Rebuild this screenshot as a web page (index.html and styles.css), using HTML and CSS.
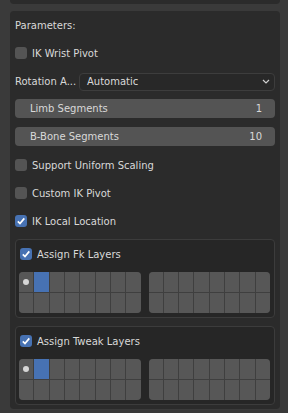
FILE: index.html
```html
<!DOCTYPE html>
<html>
    <head>
        <title>rig parameters</title>
        <meta charset="UTF-8">
        <link rel="stylesheet" href="styles.css">
    </head>
    <body>
        <div class="stub"></div>
        <div class="panel">
            <div class="row"><span class="label">Parameters:</span></div>
            <div class="row">
                <span class="check"></span>
                <span class="label">IK Wrist Pivot</span>
            </div>
            <div class="row">
                <span class="prop_name">Rotation A...</span>
                <div class="select">
                    <span>Automatic</span>
                    <svg class="chevron" width="8" height="5" viewBox="0 0 8 5"><path d="M1 1 L4 4 L7 1" fill="none" stroke="#cfcfcf" stroke-width="1.2"/></svg>
                </div>
            </div>
            <div class="row slider"><span>Limb Segments</span><span>1</span></div>
            <div class="row slider"><span>B-Bone Segments</span><span>10</span></div>
            <div class="row">
                <span class="check"></span>
                <span class="label">Support Uniform Scaling</span>
            </div>
            <div class="row">
                <span class="check"></span>
                <span class="label">Custom IK Pivot</span>
            </div>
            <div class="row">
                <span class="check on"><svg width="12" height="12" viewBox="0 0 12 12"><path d="M2.8 6.3 L5 8.5 L9.3 3.4" fill="none" stroke="#fff" stroke-width="1.7"/></svg></span>
                <span class="label">IK Local Location</span>
            </div>

            <div class="box">
                <div class="row box_head">
                    <span class="check on"><svg width="12" height="12" viewBox="0 0 12 12"><path d="M2.8 6.3 L5 8.5 L9.3 3.4" fill="none" stroke="#fff" stroke-width="1.7"/></svg></span>
                    <span class="label">Assign Fk Layers</span>
                </div>
                <div class="layers" id="fk_layers"></div>
            </div>

            <div class="box">
                <div class="row box_head">
                    <span class="check on"><svg width="12" height="12" viewBox="0 0 12 12"><path d="M2.8 6.3 L5 8.5 L9.3 3.4" fill="none" stroke="#fff" stroke-width="1.7"/></svg></span>
                    <span class="label">Assign Tweak Layers</span>
                </div>
                <div class="layers" id="tweak_layers"></div>
            </div>
        </div>
        <script>
            // two blocks of 16 layer buttons, first one holds the dot, second one is active
            function fillLayers(el) {
                for (let g = 0; g < 2; g++) {
                    const grid = document.createElement("div");
                    grid.className = "layer_grid";
                    for (let i = 0; i < 16; i++) {
                        const cell = document.createElement("div");
                        cell.className = "cell";
                        if (g == 0 && i == 0) cell.innerHTML = '<span class="dot"></span>';
                        if (g == 0 && i == 1) cell.className += " active";
                        grid.appendChild(cell);
                    }
                    el.appendChild(grid);
                }
            }
            fillLayers(document.getElementById("fk_layers"));
            fillLayers(document.getElementById("tweak_layers"));
        </script>
    </body>
</html>
```
FILE: styles.css
```css
body {
    margin: 0;
    background-color: #3a3a3a;
    font-family: "DejaVu Sans", sans-serif;
    font-size: 10px;
    color: #d9d9d9;
}
.stub {
    height: 4px;
    margin: 0 8px 0 10px;
    background-color: #2b2b2b;
    border-radius: 0 0 4px 4px;
}
.panel {
    margin: 7px 8px 0 10px;
    padding: 4px 5px;
    background-color: #2b2b2b;
    border-radius: 4px;
    display: flex;
    flex-direction: column;
    gap: 8px;
}
.row {
    height: 20px;
    display: flex;
    align-items: center;
}
.check {
    width: 12px;
    height: 12px;
    border-radius: 3px;
    background-color: #545454;
    margin-right: 5px;
    flex: none;
}
.check.on {
    background-color: #4772b3;
}
.check svg {
    display: block;
}
.prop_name {
    width: 64px;
    flex: none;
}
.select {
    flex: 1;
    height: 18px;
    box-sizing: border-box;
    margin-top: 1px;
    border: 1px solid #3d3d3d;
    border-radius: 4px;
    background-color: #282828;
    display: flex;
    align-items: center;
    justify-content: space-between;
    padding: 0 4px 0 7px;
}
.chevron {
    display: block;
}
.slider {
    height: 19px;
    margin-bottom: 1px;
    background-color: #545454;
    border-radius: 4px;
    justify-content: space-between;
    padding: 0 13px 0 15px;
}
.box {
    border: 1px solid #3c3c3c;
    border-radius: 4px;
    background-color: #262626;
    padding: 4px 4px 4px 3px;
    display: flex;
    flex-direction: column;
    gap: 8px;
}
.box_head {
    margin-left: 1px;
}
.layers {
    display: flex;
    gap: 8px;
}
.layer_grid {
    flex: 1;
    display: grid;
    grid-template-columns: repeat(8, 1fr);
    grid-template-rows: 20px 20px;
    gap: 1px;
    background-color: #3f3f3f;
    border-radius: 4px;
    overflow: hidden;
}
.cell {
    background-color: #575757;
    display: flex;
    align-items: center;
    justify-content: center;
}
.cell.active {
    background-color: #4772b3;
}
.dot {
    width: 6px;
    height: 6px;
    border-radius: 50%;
    background-color: #d6d6d6;
}
```
